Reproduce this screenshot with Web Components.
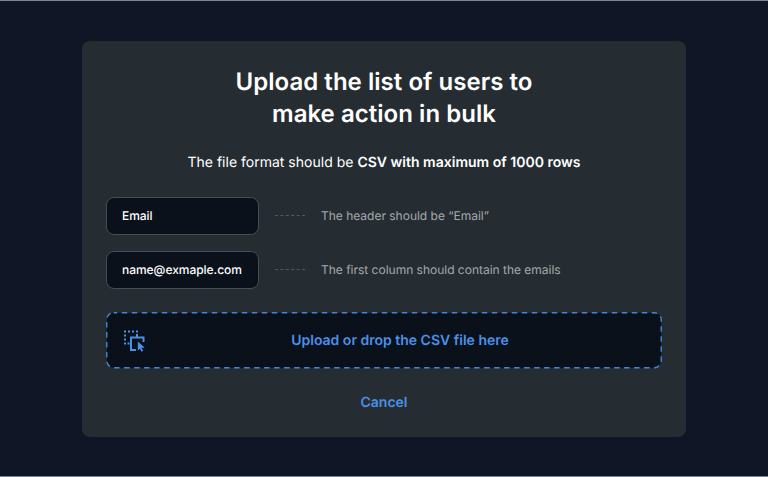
<!DOCTYPE html>
<html lang="en"><head><meta charset="utf-8"><title>Bulk upload</title>
<style>body{margin:0;font-family:Inter,sans-serif;background:#101625;text-rendering:geometricPrecision}b{font-weight:600}</style></head><body>
<upload-dialog>
<span slot="title">Upload the list of users to<br>make action in bulk</span>
<span slot="note">The file format should be <b>CSV with maximum of 1000 rows</b></span>
<format-row value="Email">The header should be “Email”</format-row>
<format-row value="name@exmaple.com">The first column should contain the emails</format-row>
<drop-zone slot="drop">Upload or drop the CSV file here</drop-zone>
<span slot="cancel">Cancel</span>
</upload-dialog>
<script>
class UploadDialog extends HTMLElement{constructor(){super();this.attachShadow({mode:'open'}).innerHTML=`
<style>
:host{display:block;box-sizing:border-box;height:477px;padding:39.5px 82px 0;border:solid #7d8794;border-width:1px 0;background:#101625;color:#fff}
section{box-sizing:border-box;width:604px;height:396px;border-radius:8px;background:#262d32;padding:25px 24px 24px;display:flex;flex-direction:column}
h1{margin:0;font-size:24px;line-height:32px;font-weight:600;text-align:center;letter-spacing:.04px}
p{margin:21px 0 22px;font-size:14px;line-height:24px;text-align:center;letter-spacing:.01px}
.rows{display:flex;flex-direction:column;gap:16px;margin-bottom:23.500px}
button{align-self:center;margin:24px 0 0;padding:0;border:0;background:none;font:600 14px/20px Inter,sans-serif;text-rendering:inherit;color:#4a90e8}
</style>
<section><h1><slot name="title"></slot></h1><p><slot name="note"></slot></p><div class="rows"><slot></slot></div><slot name="drop"></slot><button><slot name="cancel"></slot></button></section>`}}
class FormatRow extends HTMLElement{constructor(){super();this.attachShadow({mode:'open'}).innerHTML=`
<style>
:host{display:flex;align-items:center;height:38px;font-size:12px;line-height:16px;letter-spacing:-.01px;color:#a5a9ad}
.v{box-sizing:border-box;width:153px;height:38px;line-height:36px;padding-left:15px;border:1px solid #464d53;border-radius:8px;background:#0b111b;color:#fff;font-weight:500;letter-spacing:-.03px}
svg{margin:0 16px}
</style><div class="v"></div><svg width="30" height="2"><path d="M0 .5H30" stroke="#51585e" stroke-dasharray="3 2.400"/></svg><slot></slot>`;this.shadowRoot.querySelector('.v').textContent=this.getAttribute('value')}}
class DropZone extends HTMLElement{constructor(){super();this.attachShadow({mode:'open'}).innerHTML=`
<style>
:host{display:grid;grid-template:57px / 556px;align-items:center;font-size:14px;font-weight:600;color:#4a90e8}
svg,div{grid-area:1/1}
.t{padding-left:32px;text-align:center}
.i{margin-left:16px}
</style><svg width="556" height="57"><rect x=".75" y=".75" width="554.5" height="55" rx="7" fill="#0b111b" stroke="#4285d6" stroke-width="1.4" stroke-dasharray="5.5 4.5" stroke-dashoffset="2"/></svg>
<svg class="i" width="24" height="24" fill="currentColor"><path d="M2 1.500h2v2H2zM6 1.500h2v2H6zM10 1.500h2v2h-2zM14 1.500h2v2h-2zM2 5.500h2v2H2zM2 9.500h2v2H2zM2 13.500h2v2H2zM5.500 13.500h2v2h-2zM14 5h2v3h-2z"/><path d="M14 21H9V8.500h12.500V13" fill="none" stroke="currentColor" stroke-width="2"/><path d="M15.800 12.500v9l2-1.700 1.700 3 1.700-1-1.700-2.900 3.100-.4z"/></svg><div class="t"><slot></slot></div>`}}
customElements.define('upload-dialog',UploadDialog);customElements.define('format-row',FormatRow);customElements.define('drop-zone',DropZone);
</script></body></html>
